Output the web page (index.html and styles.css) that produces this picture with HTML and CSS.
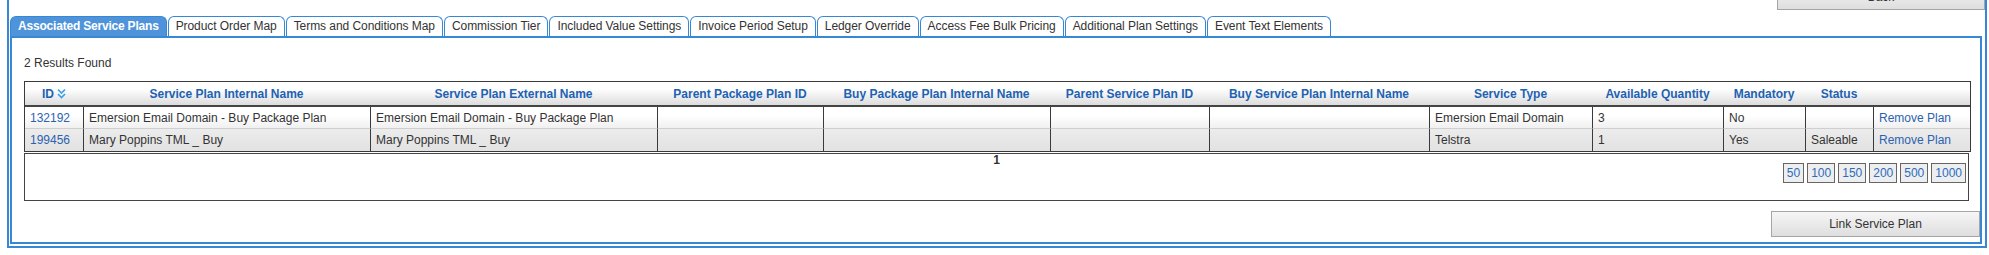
FILE: index.html
```html
<!DOCTYPE html>
<html lang="en">
<head>
    <meta charset="UTF-8">
    <title>Service Plan Associations</title>
    <link rel="stylesheet" href="styles.css">
</head>
<body>
    <div class="frame">
        <div class="toolbar">
            <button class="btn btn-back">Back</button>
        </div>

        <div class="tab-widget">
            <ul class="tabs">
                <li class="tab active">Associated Service Plans</li>
                <li class="tab">Product Order Map</li>
                <li class="tab">Terms and Conditions Map</li>
                <li class="tab">Commission Tier</li>
                <li class="tab">Included Value Settings</li>
                <li class="tab">Invoice Period Setup</li>
                <li class="tab">Ledger Override</li>
                <li class="tab">Access Fee Bulk Pricing</li>
                <li class="tab">Additional Plan Settings</li>
                <li class="tab">Event Text Elements</li>
            </ul>

            <div class="panel">
                <div class="result-count">2 Results Found</div>

                <table class="grid">
                    <colgroup>
                        <col style="width: 58px">
                        <col style="width: 287px">
                        <col style="width: 287px">
                        <col style="width: 166px">
                        <col style="width: 227px">
                        <col style="width: 159px">
                        <col style="width: 220px">
                        <col style="width: 163px">
                        <col style="width: 131px">
                        <col style="width: 82px">
                        <col style="width: 68px">
                        <col style="width: 97px">
                    </colgroup>
                    <thead>
                        <tr>
                            <th>ID<svg class="sort-icon" width="9" height="11" viewBox="0 0 9 11"><path d="M1 1.5 L4.5 5 L8 1.5 M1 6 L4.5 9.5 L8 6" fill="none" stroke="currentColor" stroke-width="1.6"/></svg></th>
                            <th>Service Plan Internal Name</th>
                            <th>Service Plan External Name</th>
                            <th>Parent Package Plan ID</th>
                            <th>Buy Package Plan Internal Name</th>
                            <th>Parent Service Plan ID</th>
                            <th>Buy Service Plan Internal Name</th>
                            <th>Service Type</th>
                            <th>Available Quantity</th>
                            <th>Mandatory</th>
                            <th>Status</th>
                            <th></th>
                        </tr>
                    </thead>
                    <tbody>
                        <tr class="row-odd">
                            <td><a href="#">132192</a></td>
                            <td>Emersion Email Domain - Buy Package Plan</td>
                            <td>Emersion Email Domain - Buy Package Plan</td>
                            <td></td>
                            <td></td>
                            <td></td>
                            <td></td>
                            <td>Emersion Email Domain</td>
                            <td>3</td>
                            <td>No</td>
                            <td></td>
                            <td><a href="#">Remove Plan</a></td>
                        </tr>
                        <tr class="row-even">
                            <td><a href="#">199456</a></td>
                            <td>Mary Poppins TML _ Buy</td>
                            <td>Mary Poppins TML _ Buy</td>
                            <td></td>
                            <td></td>
                            <td></td>
                            <td></td>
                            <td>Telstra</td>
                            <td>1</td>
                            <td>Yes</td>
                            <td>Saleable</td>
                            <td><a href="#">Remove Plan</a></td>
                        </tr>
                    </tbody>
                </table>

                <div class="pager">
                    <div class="pager-current">1</div>
                    <div class="page-sizes">
                        <a href="#" class="page-size">50</a>
                        <a href="#" class="page-size">100</a>
                        <a href="#" class="page-size">150</a>
                        <a href="#" class="page-size">200</a>
                        <a href="#" class="page-size">500</a>
                        <a href="#" class="page-size">1000</a>
                    </div>
                </div>

                <div class="actions">
                    <button class="btn btn-link-plan">Link Service Plan</button>
                </div>
            </div>
        </div>
    </div>
</body>
</html>
```

FILE: styles.css
```css
:root {
    --frame-blue: #3688d6;
    --tab-blue: #4f94da;
    --head-blue: #1d62b3;
    --link-blue: #2d62b0;
    --text-color: #333;
    --grid-line: #3a3a3a;
}

body {
    margin: 0;
    font-family: "Liberation Sans", Arial, sans-serif;
    font-size: 12px;
    color: var(--text-color);
    background: #fff;
    overflow: hidden;
}

.frame {
    box-sizing: border-box;
    width: 1980px;
    margin: -18px 0 0 7px;
    border: 2px solid var(--frame-blue);
}

.toolbar {
    display: flex;
    justify-content: flex-end;
}

.btn {
    font-family: inherit;
    font-size: 12px;
    color: var(--text-color);
    background: linear-gradient(#f6f6f6, #dedede);
    border: 1px solid #a5a5a5;
    height: 26px;
    padding: 0;
    cursor: pointer;
}

.btn-back {
    width: 208px;
}

.tab-widget {
    margin: 6px 3px 2px 1px;
}

.tabs {
    list-style: none;
    display: flex;
    gap: 1px;
    margin: 0;
    padding: 0;
}

.tab {
    height: 19px;
    line-height: 19px;
    padding: 0 7px;
    border: 1px solid var(--frame-blue);
    border-bottom: none;
    border-radius: 6px 6px 0 0;
    background: #fff;
    white-space: nowrap;
    letter-spacing: -0.06px;
}

.tab.active {
    background: var(--tab-blue);
    color: #fff;
    font-weight: bold;
    letter-spacing: -0.2px;
}

.panel {
    border: 2px solid var(--frame-blue);
    padding: 0 11px 5px 12px;
}

.result-count {
    line-height: 14px;
    margin: 18px 0 11px;
}

.grid {
    width: 1945px;
    table-layout: fixed;
    border-collapse: separate;
    border-spacing: 0;
    border: 1px solid var(--grid-line);
}

.grid th,
.grid td {
    box-sizing: border-box;
    white-space: nowrap;
    overflow: hidden;
}

.grid th {
    height: 25px;
    padding: 0 4px;
    text-align: center;
    color: var(--head-blue);
    font-weight: bold;
    background: linear-gradient(#ffffff 30%, #dcdcdc);
    border-bottom: 2px solid #444;
}

.sort-icon {
    color: #3aa0e6;
    margin-left: 3px;
    vertical-align: -1px;
}

.grid td {
    height: 22px;
    padding: 0 5px;
    border-left: 1px solid var(--grid-line);
}

.grid td:first-child {
    border-left: none;
}

.row-odd td {
    background: linear-gradient(#ffffff 40%, #f0f0f0);
    border-bottom: 1px solid #cfcfcf;
}

.row-even td {
    background: linear-gradient(#ececec, #e2e2e2);
}

.grid a {
    color: var(--link-blue);
    text-decoration: none;
}

.pager {
    height: 46px;
    margin-top: 1px;
    border: 1px solid #444;
}

.pager-current {
    height: 9px;
    line-height: 12px;
    text-align: center;
    font-weight: bold;
}

.page-sizes {
    display: flex;
    justify-content: flex-end;
    gap: 3px;
    padding-right: 2px;
}

.page-size {
    height: 18px;
    line-height: 18px;
    padding: 0 3px;
    border: 1px solid #666;
    background: #eeeeee;
    color: #2a6cc0;
    text-decoration: none;
}

.actions {
    display: flex;
    justify-content: flex-end;
    margin: 10px -11px 0 0;
}

.btn-link-plan {
    width: 209px;
}
```
